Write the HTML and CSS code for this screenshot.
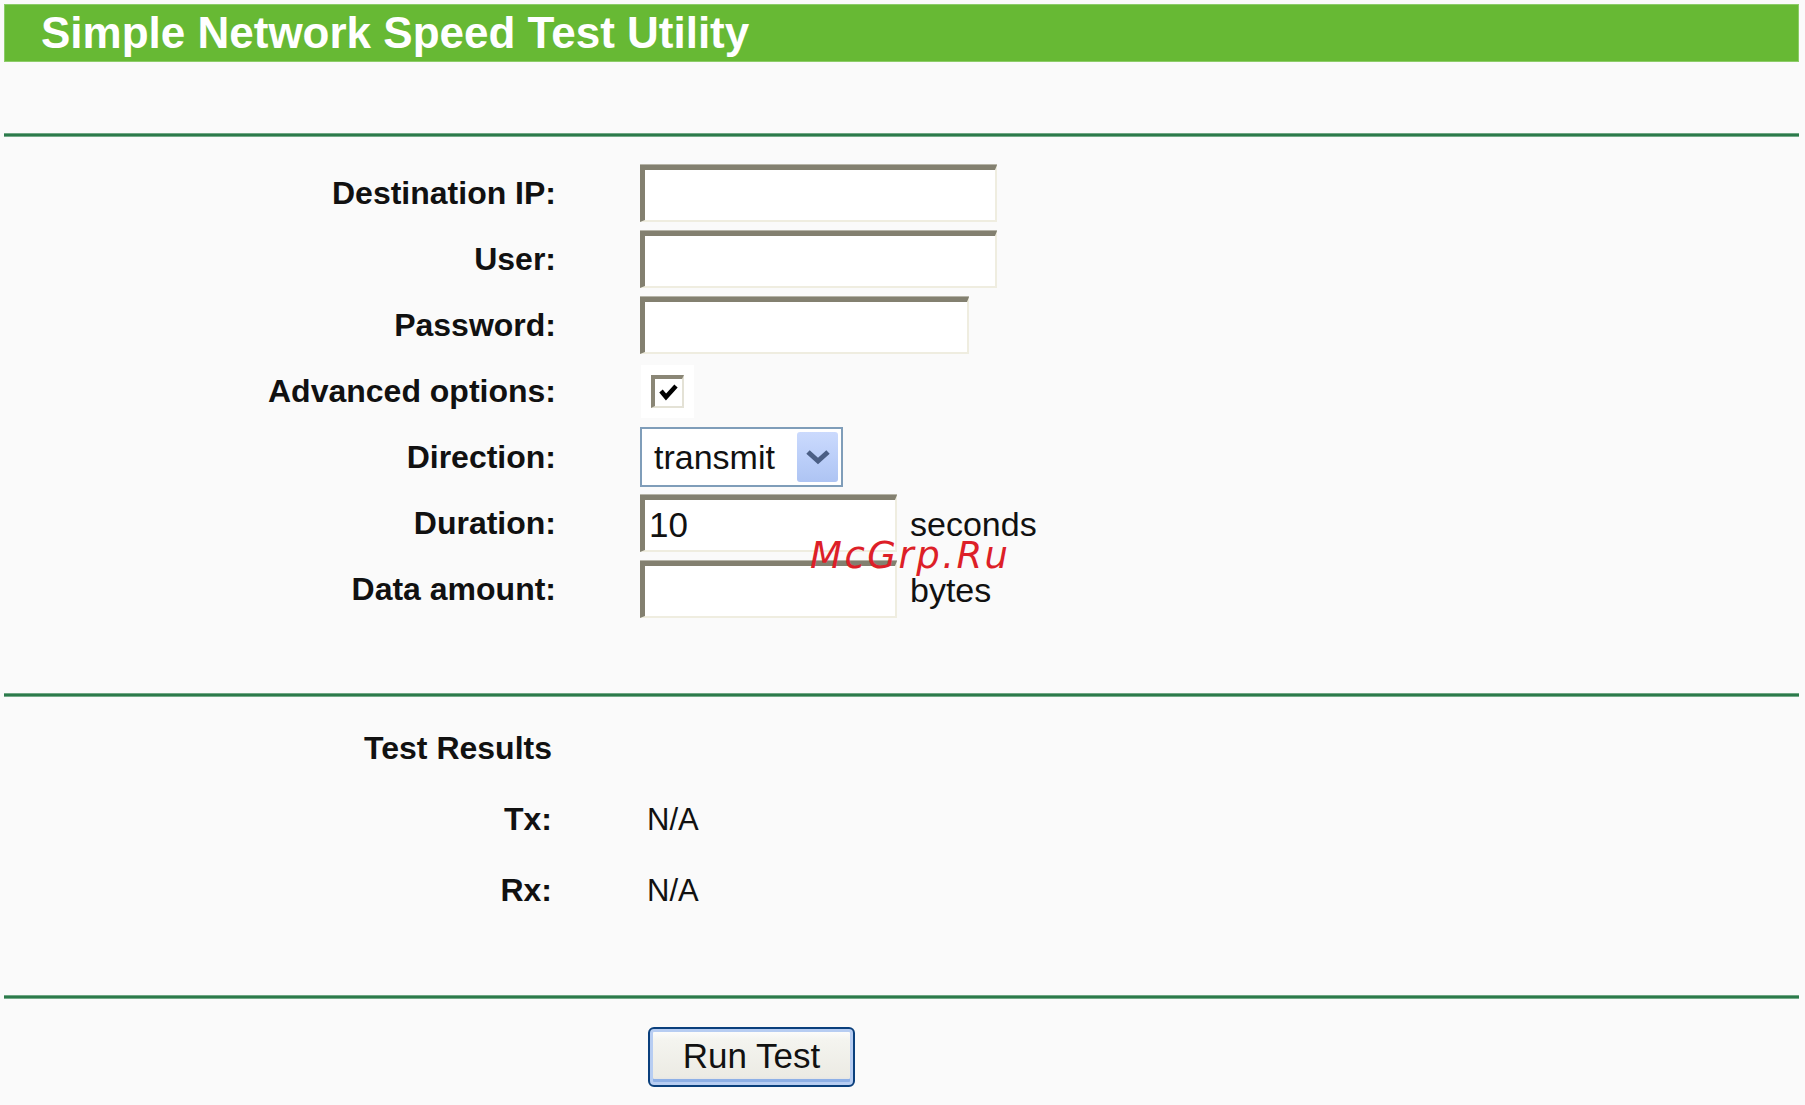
FILE: index.html
```html
<!DOCTYPE html>
<html>
<head>
<meta charset="utf-8">
<title>Simple Network Speed Test Utility</title>
<link rel="stylesheet" href="styles.css">
</head>
<body>
<div class="page">
  <div class="header">Simple Network Speed Test Utility</div>
  <div class="rule rule-top"></div>

  <div class="form">
    <div class="label">Destination IP:</div>
    <div class="field"><span class="text-input w-long"></span></div>

    <div class="label">User:</div>
    <div class="field"><span class="text-input w-long"></span></div>

    <div class="label">Password:</div>
    <div class="field"><span class="text-input w-mid"></span></div>

    <div class="label">Advanced options:</div>
    <div class="field">
      <span class="check-cell">
        <span class="check-box">
          <svg width="20" height="18" viewBox="0 0 20 18"><path d="M2 8 L7 14 L17 3" fill="none" stroke="#000" stroke-width="4.5"/></svg>
        </span>
      </span>
    </div>

    <div class="label">Direction:</div>
    <div class="field">
      <span class="select">
        <span class="select-value">transmit</span>
        <span class="select-btn">
          <svg width="26" height="16" viewBox="0 0 26 16"><polyline points="3,3 13,12 23,3" fill="none" stroke="#4b5f85" stroke-width="5"/></svg>
        </span>
      </span>
    </div>

    <div class="label">Duration:</div>
    <div class="field"><span class="text-input w-short">10</span><span class="unit">seconds</span></div>

    <div class="label">Data amount:</div>
    <div class="field"><span class="text-input w-short"></span><span class="unit">bytes</span></div>
  </div>

  <div class="rule rule-mid"></div>

  <div class="results">
    <div class="r-label">Test Results</div>
    <div class="r-value"></div>
    <div class="r-label">Tx:</div>
    <div class="r-value">N/A</div>
    <div class="r-label">Rx:</div>
    <div class="r-value">N/A</div>
  </div>

  <div class="rule rule-bottom"></div>

  <div class="actions">
    <span class="button">Run Test</span>
  </div>
</div>
<div class="watermark">McGrp.Ru</div>
</body>
</html>
```

FILE: styles.css
```css
html, body {
  margin: 0;
  padding: 0;
  background: #fafafa;
  overflow: hidden;
}

body {
  padding: 4px;
  font-family: "Liberation Sans", Arial, sans-serif;
  color: #111;
}

.page {
  width: 1795px;
}

.header {
  box-sizing: border-box;
  height: 58px;
  line-height: 56px;
  padding-left: 36px;
  background: #67b934;
  border: 1px solid #8ccc68;
  color: #fff;
  font-weight: bold;
  font-size: 44px;
  white-space: nowrap;
}

.rule {
  height: 4px;
  background: linear-gradient(#9fc7ad, #2c7a4b 30%, #2c7a4b 70%, #a9cdb6);
}

.rule-top { margin-top: 71px; }
.rule-mid { margin-top: 71px; }
.rule-bottom { margin-top: 69px; }

.form {
  margin-top: 23px;
  display: grid;
  grid-template-columns: 552px auto;
  column-gap: 84px;
  grid-auto-rows: 66px;
  align-items: center;
}

.label {
  text-align: right;
  font-weight: bold;
  font-size: 32px;
  white-space: nowrap;
}

.field {
  display: flex;
  align-items: center;
  gap: 13px;
  font-size: 34px;
}

.text-input {
  box-sizing: border-box;
  height: 57px;
  background: #fff;
  border-top: 5px solid #838070;
  border-left: 5px solid #838070;
  border-right: 2px solid #efede0;
  border-bottom: 2px solid #efede0;
  box-shadow: 0 -1px 0 #b6b4a8;
  display: flex;
  align-items: center;
  padding-left: 4px;
  font-size: 35px;
  color: #111;
}

.w-long { width: 357px; }
.w-mid { width: 329px; }
.w-short { width: 257px; }

.unit {
  font-size: 34px;
  color: #111;
  padding-top: 2px;
}

.check-cell {
  width: 53px;
  height: 53px;
  margin-left: 1px;
  background: #fff;
  display: flex;
  align-items: center;
  justify-content: center;
}

.check-box {
  box-sizing: border-box;
  width: 33px;
  height: 33px;
  background: #fff;
  border-top: 4px solid #8a8676;
  border-left: 4px solid #8a8676;
  border-right: 2px solid #e4e2d6;
  border-bottom: 2px solid #e4e2d6;
  display: flex;
  align-items: center;
  justify-content: center;
}

.select {
  box-sizing: border-box;
  width: 203px;
  height: 60px;
  background: #fff;
  border: 2px solid #7f9db9;
  display: flex;
  align-items: center;
  justify-content: space-between;
  padding: 3px 3px 3px 12px;
}

.select-value {
  font-size: 34px;
  color: #111;
}

.select-btn {
  width: 41px;
  height: 50px;
  border-radius: 3px;
  background: linear-gradient(#cbdafd, #b9cdf8 60%, #aec4f3);
  display: flex;
  align-items: center;
  justify-content: center;
}

.results {
  margin-top: 16px;
  display: grid;
  grid-template-columns: 548px auto;
  column-gap: 95px;
  grid-auto-rows: 71px;
  line-height: 71px;
}

.r-label {
  text-align: right;
  font-weight: bold;
  font-size: 32px;
}

.r-value {
  font-size: 31px;
}

.actions {
  margin-top: 28px;
  padding-left: 644px;
}

.button {
  box-sizing: border-box;
  width: 207px;
  height: 60px;
  display: flex;
  align-items: center;
  justify-content: center;
  border: 2px solid #0a3f7c;
  border-radius: 6px;
  background: linear-gradient(#ffffff, #f4f4ef 20%, #ecebe4 85%, #d6d9e8);
  box-shadow: inset 0 0 0 3px #b7cdf2, inset 0 -3px 0 3px #8eb0e6;
  font-size: 35px;
  color: #111;
  padding-bottom: 2px;
}

.watermark {
  position: absolute;
  left: 810px;
  top: 537px;
  font-family: "DejaVu Sans", sans-serif;
  font-style: oblique;
  font-size: 37px;
  line-height: 1;
  letter-spacing: 2.5px;
  color: #dd1f28;
}
```
